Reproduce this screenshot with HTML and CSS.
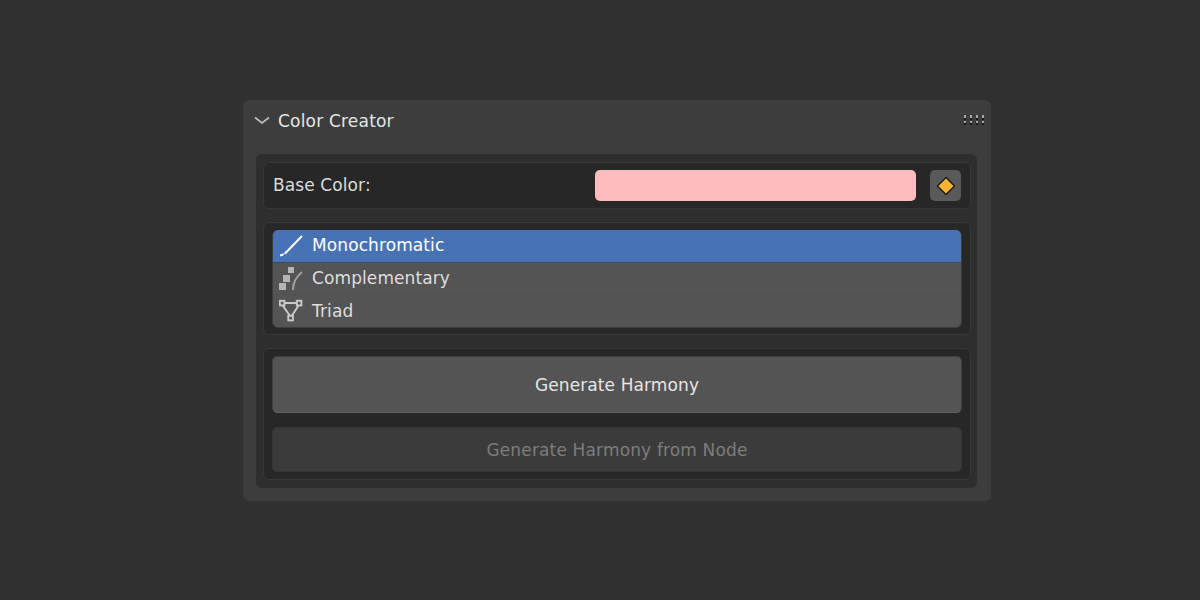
FILE: index.html
```html
<!DOCTYPE html>
<html lang="en">
<head>
<meta charset="utf-8">
<title>Color Creator</title>
<link rel="stylesheet" href="styles.css">
</head>
<body>
<section class="panel">
  <header class="panel-head">
    <svg class="chevron" width="16" height="9" viewBox="0 0 16 9"><path d="M1 1.500l7 5.500 7-5.500" fill="none" stroke="#bdbdbd" stroke-width="1.700"/></svg>
    <h1 class="panel-title">Color Creator</h1>
    <svg class="grip" width="20" height="10" viewBox="0 0 20 10"><g fill="#a6a6a6"><rect x="0" y="0" width="2" height="3"/><rect x="6" y="0" width="2" height="3"/><rect x="12" y="0" width="2" height="3"/><rect x="18" y="0" width="2" height="3"/><rect x="0" y="6" width="2" height="2"/><rect x="6" y="6" width="2" height="2"/><rect x="12" y="6" width="2" height="2"/><rect x="18" y="6" width="2" height="2"/></g><g fill="#161616"><rect x="0" y="3" width="2" height="2"/><rect x="6" y="3" width="2" height="2"/><rect x="12" y="3" width="2" height="2"/><rect x="18" y="3" width="2" height="2"/><rect x="0" y="8" width="2" height="2"/><rect x="6" y="8" width="2" height="2"/><rect x="12" y="8" width="2" height="2"/><rect x="18" y="8" width="2" height="2"/></g></svg>
  </header>
  <div class="panel-body">
    <div class="box color-box">
      <span class="label">Base Color:</span>
      <div class="swatch"></div>
      <div class="key-btn">
        <svg width="20" height="20" viewBox="0 0 20 20"><path d="M10 1.500L18.500 10 10 18.500 1.500 10z" fill="#f8b534" stroke="#141414" stroke-width="1.200" stroke-linejoin="round"/></svg>
      </div>
    </div>
    <div class="box list-box">
      <ul class="list">
        <li class="row selected">
          <svg class="row-icon" width="24" height="24" viewBox="0 0 24 24"><path d="M1 21.500c3-.8 5-1.800 7-4L23 2" fill="none" stroke="#fff" stroke-width="1.900" stroke-dasharray="4 1 40"/></svg>
          <span>Monochromatic</span>
        </li>
        <li class="row middle">
          <svg class="row-icon" width="24" height="24" viewBox="0 0 24 24"><g fill="#b4b4b4"><rect x="9" y="0" width="6" height="6"/><rect x="4" y="8" width="7" height="7"/><rect x="0" y="16" width="7" height="7"/></g><path d="M14 23c0-7 3-13 9-18" fill="none" stroke="#a0a0a0" stroke-width="2"/></svg>
          <span>Complementary</span>
        </li>
        <li class="row">
          <svg class="row-icon" width="24" height="24" viewBox="0 0 24 24"><g fill="none" stroke="#cacaca" stroke-width="1.900"><rect x="0.800" y="1.800" width="4.600" height="4.600"/><rect x="17.800" y="1.800" width="4.600" height="4.600"/><rect x="9.300" y="16.800" width="4.600" height="4.600"/><path d="M5.400 4h12.400M3.600 6.400l7.300 10.400M19.600 6.400l-6.800 10.400"/></g></svg>
          <span>Triad</span>
        </li>
      </ul>
    </div>
    <div class="box action-box">
      <button class="btn btn-main" type="button">Generate Harmony</button>
      <button class="btn btn-off" type="button" disabled>Generate Harmony from Node</button>
    </div>
  </div>
</section>
</body>
</html>
```
FILE: styles.css
```css
* { box-sizing: border-box; }
html, body { margin: 0; height: 100%; }
body {
  width: 1200px;
  height: 600px;
  overflow: hidden;
  background: #303030;
  padding: 100px 209px 99px 243px;
  font-family: "DejaVu Sans", "Liberation Sans", sans-serif;
  font-size: 17px;
  letter-spacing: 0.1px;
  color: #e2e2e2;
}
.panel {
  width: 748px;
  height: 401px;
  background: #3d3d3d;
  border-radius: 6px;
  padding-left: 13px;
  padding-right: 14px;
}
.panel-head {
  height: 54px;
  display: flex;
  align-items: center;
  padding-bottom: 13px;
}
.chevron { margin-left: -2px; margin-top: -1px; }
.panel-title {
  margin: 0 0 0 8px;
  font-size: 17px;
  font-weight: 400;
  color: #e6e6e6;
  letter-spacing: 0.2px;
}
.grip { margin-left: auto; margin-right: -7px; margin-top: -1px; }
.panel-body {
  height: 334px;
  background: #2e2e2e;
  border-radius: 6px;
  padding: 8px 6px 7px 7px;
  display: flex;
  flex-direction: column;
  gap: 13px;
}
.box {
  background: #272727;
  border: 1px solid #383838;
  border-radius: 6px;
}
.color-box {
  height: 47px;
  display: flex;
  align-items: center;
  padding: 0 9px;
}
.label { color: #dcdcdc; flex: 0 0 322px; margin-top: -2px; }
.swatch {
  width: 321px;
  height: 31px;
  background: #ffbcbe;
  border-radius: 5px;
}
.key-btn {
  width: 31px;
  height: 31px;
  margin-left: 14px;
  background: #5a5a5a;
  border-radius: 5px;
  display: flex;
  align-items: center;
  justify-content: center;
}
.list-box {
  height: 113px;
  padding: 7px 8px 6px;
}
.list {
  margin: 0;
  padding: 0;
  list-style: none;
  background: #545454;
  border: 1px solid #3c3c3c;
  border-top: 0;
  border-radius: 6px;
  overflow: hidden;
}
.row {
  height: 32px;
  display: flex;
  align-items: center;
  gap: 9px;
  padding-left: 6px;
  color: #dedede;
}
.row-icon { flex: none; }
.selected {
  height: 33px;
  padding-bottom: 3px;
  background: #4772b3;
  color: #fff;
  border-bottom: 1px solid #3a4a60;
}
.selected .row-icon { margin-top: 3px; }
.middle {
  padding-bottom: 1px;
  border-bottom: 1px solid #505050;
}
.middle .row-icon { margin-top: 1px; }
.action-box {
  height: 132px;
  padding: 7px 8px 7px;
  display: flex;
  flex-direction: column;
  gap: 14px;
}
.btn {
  display: block;
  width: 100%;
  border: 1px solid #3e3e3e;
  border-radius: 5px;
  font: inherit;
  letter-spacing: 0.1px;
  padding: 0;
}
.btn-main {
  height: 57px;
  background: #545454;
  color: #e6e6e6;
  border-bottom-color: #5e5e5e;
}
.btn-off {
  height: 45px;
  background: #3b3b3b;
  color: #7d7d7d;
  border-color: #353535;
  letter-spacing: 0.15px;
}
```
